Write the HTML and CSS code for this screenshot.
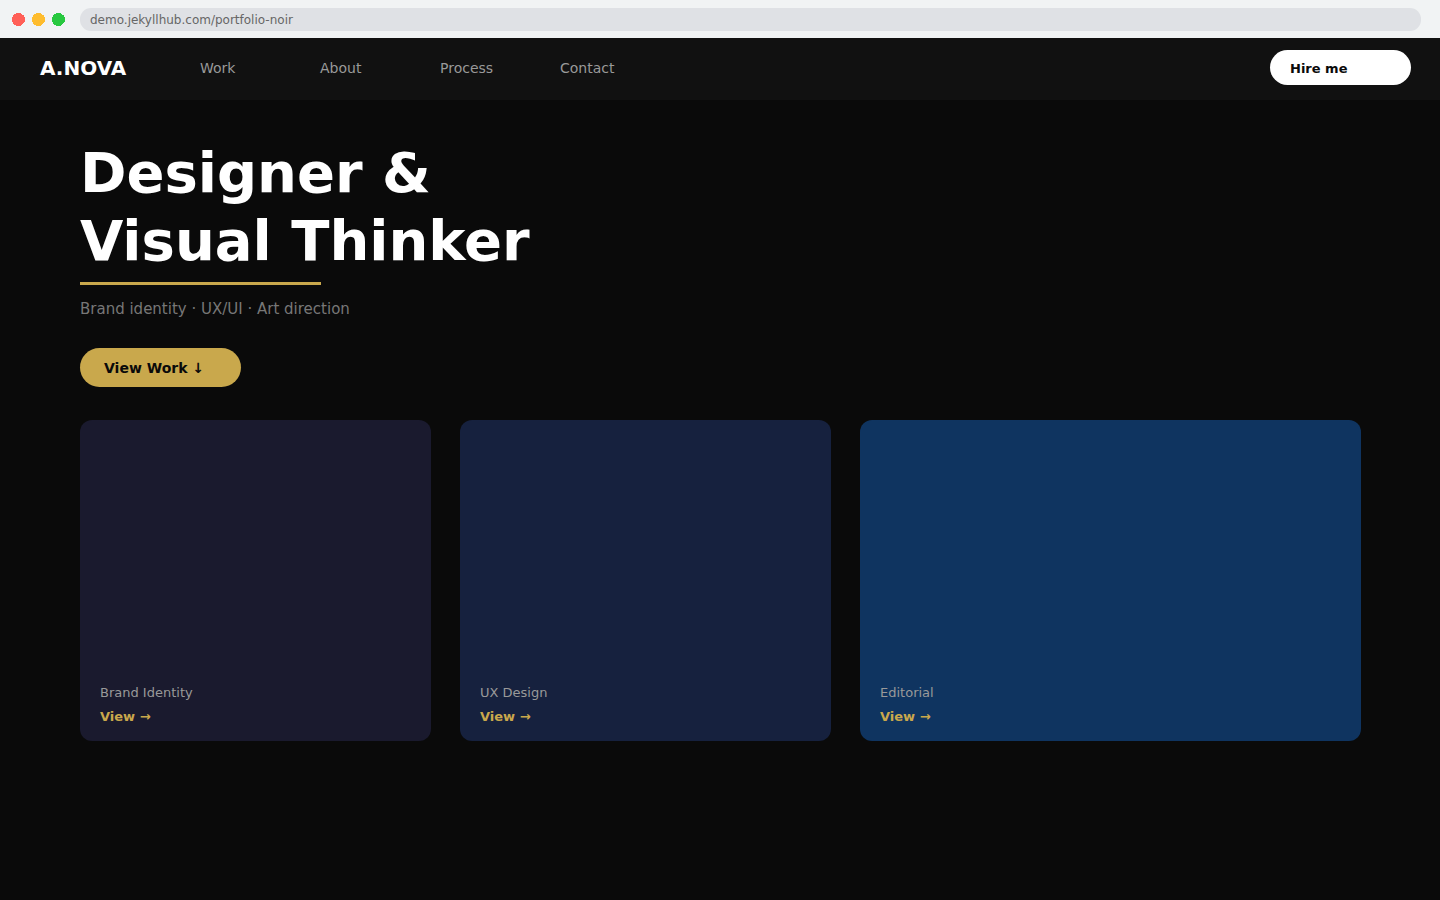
FILE: index.html
```html
<!DOCTYPE html>
<html lang="en">
<head>
<meta charset="utf-8">
<title>A.NOVA</title>
<link rel="stylesheet" href="styles.css">
</head>
<body>
<div class="browser">
  <svg class="lights" width="54" height="14" viewBox="0 0 54 14" shape-rendering="crispEdges"><circle cx="6.5" cy="7.5" r="6.5" fill="#ff5f57"/><circle cx="26.5" cy="7.5" r="6.5" fill="#febc2e"/><circle cx="46.5" cy="7.5" r="6.5" fill="#28c840"/></svg>
  <div class="address">demo.jekyllhub.com/portfolio-noir</div>
</div>
<header class="header">
  <div class="logo">A.NOVA</div>
  <nav class="nav"><a>Work</a><a>About</a><a>Process</a><a>Contact</a></nav>
  <a class="hire">Hire me</a>
</header>
<main class="main">
  <h1 class="title">Designer &amp;<br>Visual Thinker</h1>
  <div class="rule"></div>
  <p class="tagline">Brand identity · UX/UI · Art direction</p>
  <a class="cta">View Work ↓</a>
  <section class="cards">
    <article class="card brand"><span class="label">Brand Identity</span><a class="view">View →</a></article>
    <article class="card ux"><span class="label">UX Design</span><a class="view">View →</a></article>
    <article class="card editorial"><span class="label">Editorial</span><a class="view">View →</a></article>
  </section>
</main>
</body>
</html>
```
FILE: styles.css
```css
* { box-sizing: border-box; }
body { margin: 0; height: 900px; overflow: hidden; display: flex; flex-direction: column; background: #0a0a0a; font-family: "DejaVu Sans", sans-serif; }
.browser { height: 38px; flex: none; background: #f1f3f4; display: flex; align-items: flex-start; padding: 8px 19px 0 12px; }
.lights { margin-top: 4px; flex: none; }
.address { margin-left: 14px; flex: 1; height: 23px; border-radius: 11px; background: #dfe1e5; color: #666; font-size: 12px; line-height: 24px; padding-left: 10px; }
.header { height: 62px; flex: none; background: #111; display: flex; padding: 12px 29px 0 40px; }
.logo { width: 160px; color: #fff; font-weight: bold; font-size: 20px; line-height: 36px; }
.nav { display: flex; flex: 1; }
.nav a { width: 120px; color: #999; font-size: 14px; line-height: 36px; }
.hire { width: 141px; height: 35px; border-radius: 18px; background: #fff; color: #0a0a0a; font-size: 13px; font-weight: bold; line-height: 37px; padding-left: 20px; }
.main { padding: 39px 79px 0 80px; }
.title { margin: 0; color: #fff; font-size: 56px; line-height: 68px; font-weight: bold; }
.rule { width: 241px; height: 3px; background: #c9a84c; margin-top: 7px; }
.tagline { margin: 14px 0 0; color: #777; font-size: 15px; line-height: 20px; }
.cta { display: block; margin-top: 29px; width: 161px; height: 39px; border-radius: 20px; background: #c9a84c; color: #0a0a0a; font-weight: bold; font-size: 14px; line-height: 40px; padding-left: 24px; }
.cards { display: grid; grid-template-columns: 351px 371px 501px; gap: 29px; margin-top: 33px; }
.card { height: 321px; border-radius: 12px; display: flex; flex-direction: column; justify-content: flex-end; padding: 0 20px 12px; font-size: 13px; line-height: 24px; }
.brand { background: #1a1a2e; }
.ux { background: #16213e; }
.editorial { background: #0f3460; }
.label { color: #999; }
.view { color: #c9a84c; font-weight: bold; }
```
